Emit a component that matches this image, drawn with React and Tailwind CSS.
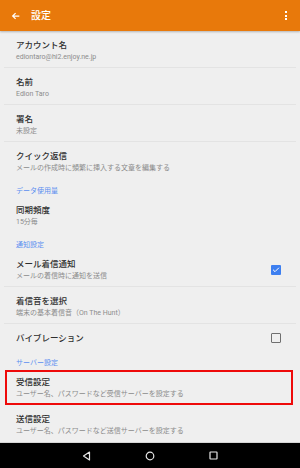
import { Check } from "lucide-react";

const font = { fontFamily: "Roboto, 'Noto Sans CJK JP', sans-serif" };

function Row({ title, sub, divider, right, pb = "pb-[5px]" }) {
  return (
    <>
      <div className={`flex items-center pl-4 pr-[19px] pt-[7px] ${divider ? "pb-[4px]" : pb}`}>
        <div className="flex-1 min-w-0">
          <div className="h-[14px] text-[8.5px] leading-[14px] font-medium text-[#2e2e2e]">{title}</div>
          {sub && (
            <div className="h-[11px] text-[7px] leading-[11px] text-[#8c8c8c] whitespace-nowrap">{sub}</div>
          )}
        </div>
        {right}
      </div>
      {divider && <div className="h-px mx-[4px] bg-[#e3e3e3]" />}
    </>
  );
}

function Section({ label }) {
  return (
    <div className="pl-4 pt-[7px] h-[17px] text-[7px] leading-[10px] text-[#5d8ff0]">{label}</div>
  );
}

export default function App() {
  return (
    <div className="w-[300px] h-[468px] bg-[#efefef] flex flex-col overflow-hidden" style={font}>
      {/* Header */}
      <div className="h-[31px] shrink-0 bg-[#e8790b] flex items-center pl-[11px] pr-[13px] shadow-[0_1px_2px_rgba(0,0,0,0.25)] relative z-10">
        <svg width="10" height="10" viewBox="0 0 24 24" className="text-white">
          <path d="M20 12H5M11 5l-7 7 7 7" fill="none" stroke="currentColor" strokeWidth="3" />
        </svg>
        <div className="ml-[10px] text-white text-[10px] font-medium">設定</div>
        <div className="flex-1" />
        <div className="flex flex-col gap-[1.5px]">
          <div className="w-[2px] h-[2px] bg-white" />
          <div className="w-[2px] h-[2px] bg-white" />
          <div className="w-[2px] h-[2px] bg-white" />
        </div>
      </div>

      {/* List */}
      <div className="flex-1 flex flex-col">
        <Row title="アカウント名" sub="ediontaro@hi2.enjoy.ne.jp" divider />
        <Row title="名前" sub="Edion Taro" divider />
        <Row title="署名" sub="未設定" divider />
        <Row title="クイック返信" sub="メールの作成時に頻繁に挿入する文章を編集する" />
        <Section label="データ使用量" />
        <Row title="同期頻度" sub="15分毎" />
        <Section label="通知設定" />
        <Row
          title="メール着信通知"
          sub="メールの着信時に通知を送信"
          divider
          right={
            <div className="w-[10px] h-[10px] rounded-[1px] bg-[#3d7ff0] flex items-center justify-center">
              <Check size={8} color="white" strokeWidth={3} />
            </div>
          }
        />
        <Row title="着信音を選択" sub="端末の基本着信音（On The Hunt）" divider />
        <Row
          title="バイブレーション"
          pb="pb-[6px]"
          right={<div className="w-[10px] h-[10px] rounded-[1px] border-[1.5px] border-[#6f6f6f]" />}
        />
        <Section label="サーバー設定" />
        <div className="relative">
          <Row title="受信設定" sub="ユーザー名、パスワードなど受信サーバーを設定する" />
          <div className="absolute left-[5px] right-[7px] top-[2px] bottom-0 border-2 border-[#ee0a0a]" />
        </div>
        <Row title="送信設定" sub="ユーザー名、パスワードなど送信サーバーを設定する" />
      </div>

      {/* Nav bar */}
      <div className="h-px shrink-0 bg-[#d6d6d6]" />
      <div className="h-[25px] shrink-0 bg-black flex items-center justify-center gap-[54px]">
        <svg width="9" height="10" viewBox="0 0 9 10">
          <path d="M7.5 1 L1.5 5 L7.5 9 Z" fill="none" stroke="#e8e8e8" strokeWidth="1.2" strokeLinejoin="round" />
        </svg>
        <svg width="10" height="10" viewBox="0 0 10 10">
          <circle cx="5" cy="5" r="3.8" fill="none" stroke="#e8e8e8" strokeWidth="1.2" />
        </svg>
        <svg width="9" height="9" viewBox="0 0 9 9">
          <rect x="1" y="1" width="7" height="7" rx="0.5" fill="none" stroke="#e8e8e8" strokeWidth="1.2" />
        </svg>
      </div>
    </div>
  );
}
